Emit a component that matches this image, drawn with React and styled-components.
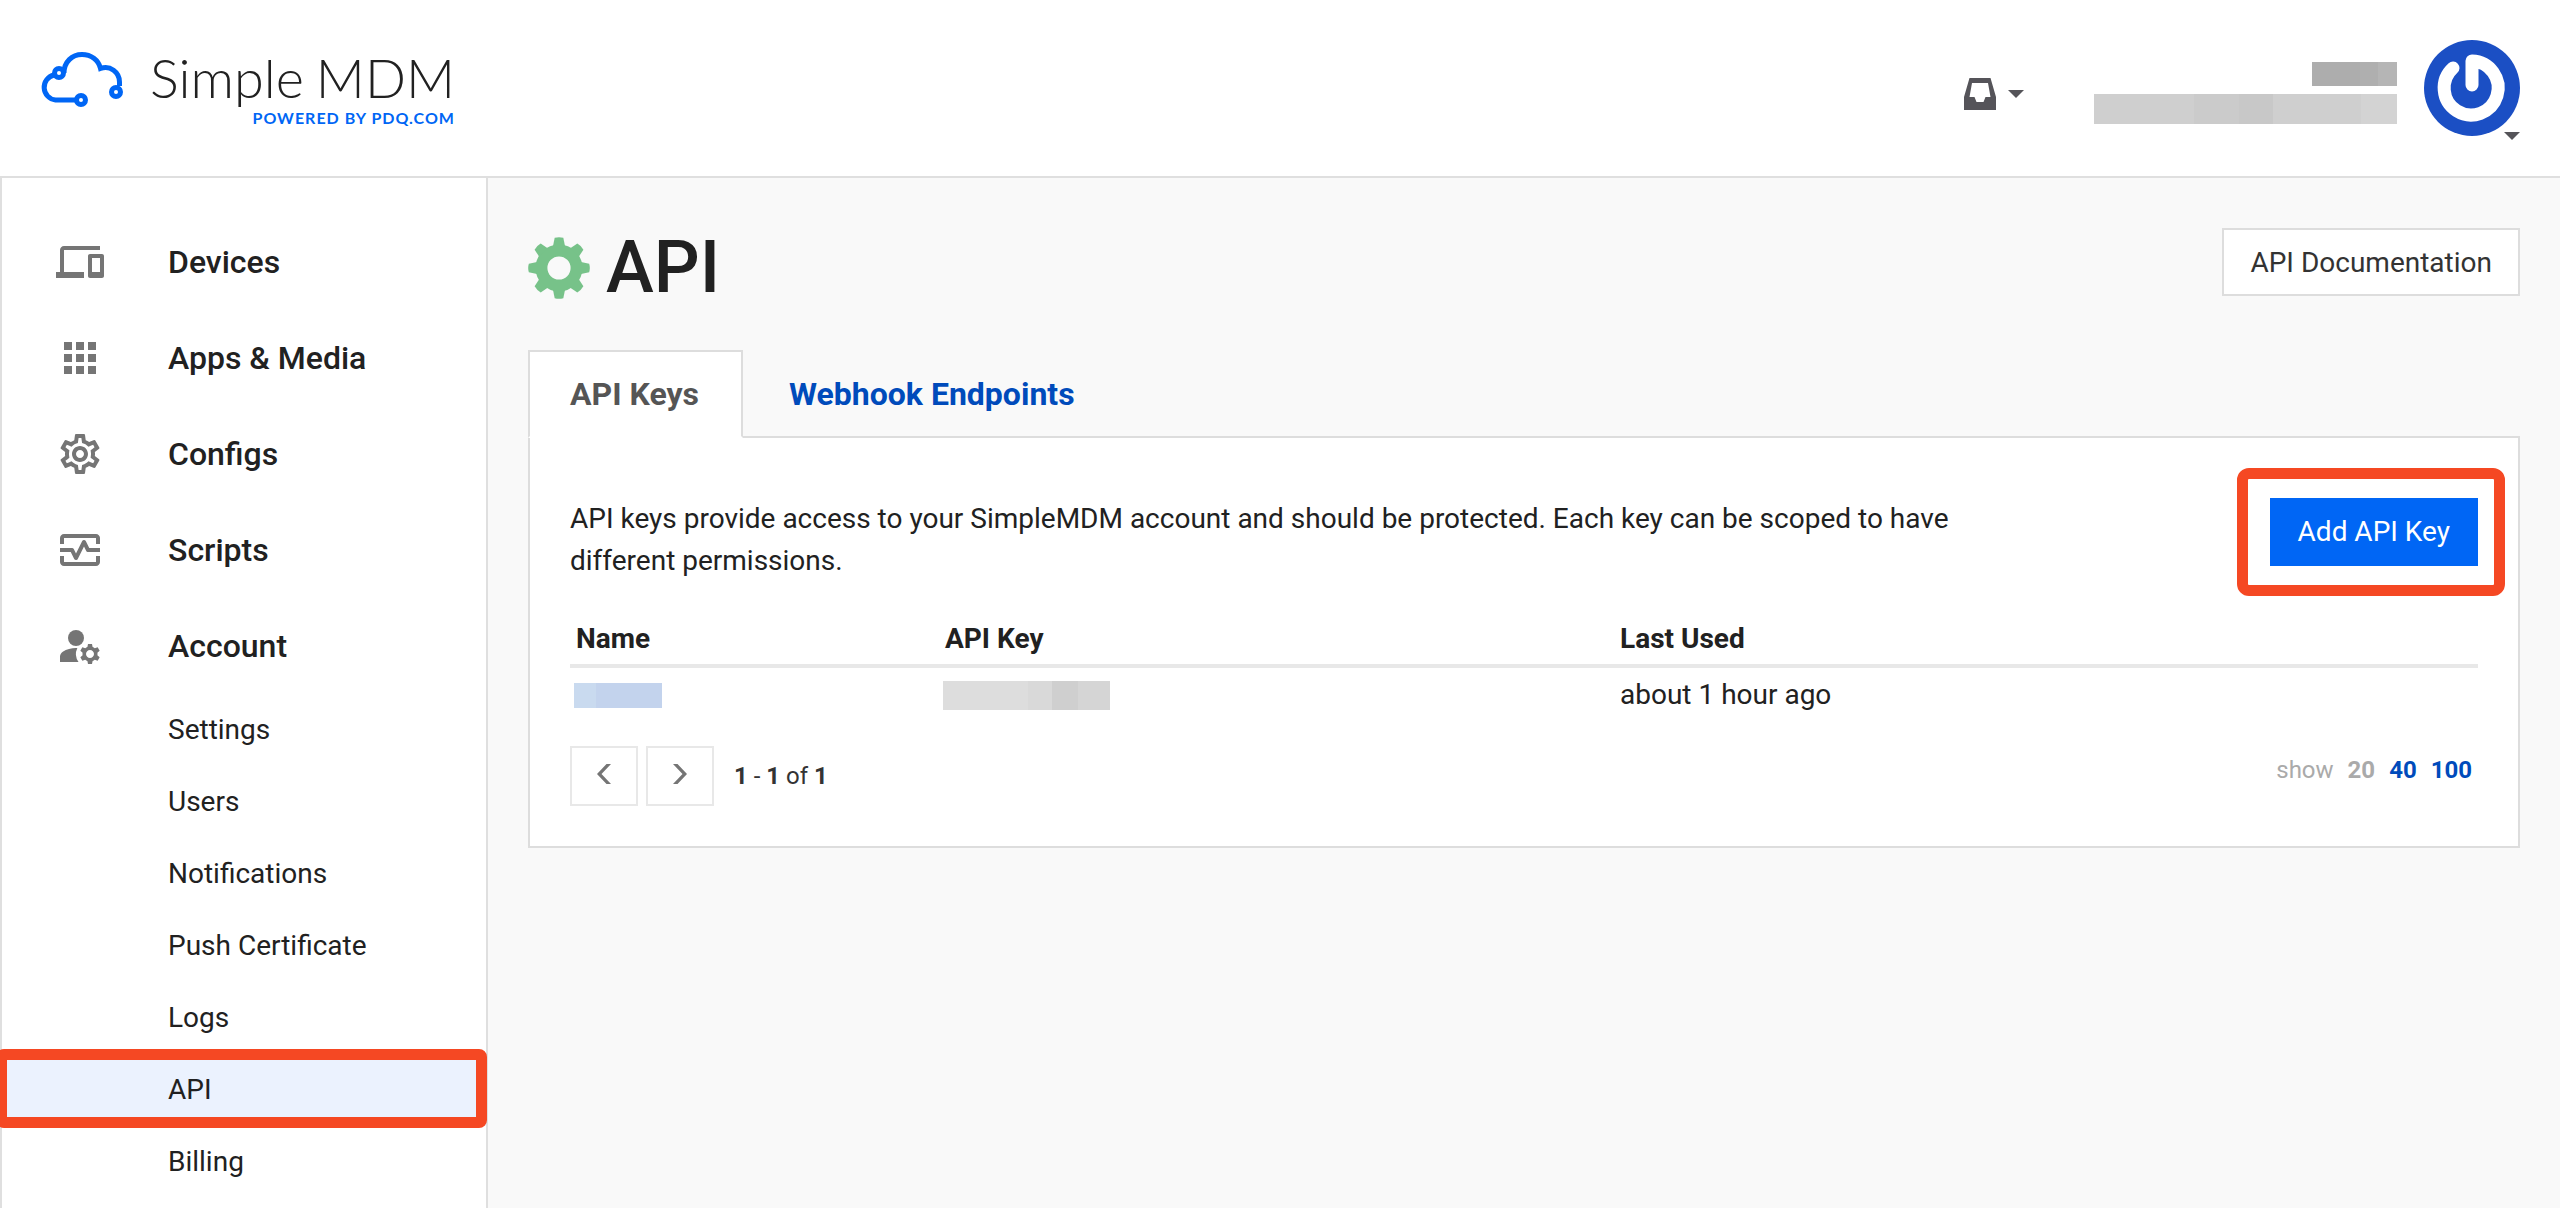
import styled, { createGlobalStyle } from "styled-components";
import {
  MdDevices,
  MdApps,
  MdOutlineSettings,
  MdOutlineMonitorHeart,
  MdManageAccounts,
} from "react-icons/md";

const GlobalStyle = createGlobalStyle`
  * {
    box-sizing: border-box;
  }
  body {
    margin: 0;
    background-color: #f9f9f9;
    color: #212121;
    font-family: Roboto, "Liberation Sans", sans-serif;
    font-size: 28px;
    line-height: 42px;
  }
  a {
    color: inherit;
    text-decoration: none;
  }
  button {
    font: inherit;
    cursor: pointer;
  }
`;

const Page = styled.div`
  display: flex;
  flex-direction: column;
  height: 100vh;
  overflow: hidden;
`;

const Header = styled.header`
  flex: none;
  display: flex;
  justify-content: space-between;
  align-items: flex-start;
  padding: 40px 40px 32px;
  height: 178px;
  background-color: white;
  border-bottom: 2px solid #dfdfdf;
`;

const Logo = styled.a`
  display: flex;
  gap: 24px;
  padding-top: 8px;
`;

const LogoText = styled.span`
  display: flex;
  flex-direction: column;
  align-items: flex-end;
`;

const Brand = styled.span`
  display: flex;
  gap: 12px;
  font-family: Lato, sans-serif;
  font-weight: 300;
  font-size: 54px;
  line-height: 60px;
`;

const Tagline = styled.span`
  color: #0066f5;
  font-family: Lato, sans-serif;
  font-weight: 700;
  font-size: 16px;
  line-height: 20px;
  letter-spacing: 1px;
`;

const HeaderRight = styled.div`
  display: flex;
  align-items: flex-start;
`;

const InboxButton = styled.button`
  display: flex;
  align-items: center;
  gap: 12px;
  padding: 0;
  margin: 38px 70px 0 0;
  border: none;
  background: none;
`;

const Person = styled.div`
  display: flex;
  flex-direction: column;
  align-items: flex-end;
  gap: 8px;
  padding-top: 22px;
  margin-right: 27px;
`;

const Redacted = styled.span`
  display: block;
  width: ${(props) => props.$width}px;
  height: ${(props) => props.$height}px;
  background: linear-gradient(to right, ${(props) => props.$fill});
`;

const AvatarButton = styled.button`
  position: relative;
  padding: 0;
  border: none;
  background: none;
  line-height: 0;
`;

const AvatarCaret = styled.span`
  position: absolute;
  right: 0;
  bottom: -4px;
`;

const Body = styled.div`
  flex: 1;
  display: flex;
  min-height: 0;
`;

const Sidebar = styled.nav`
  flex: none;
  width: 488px;
  padding-top: 36px;
  background-color: white;
  border: 2px solid #dfdfdf;
  border-width: 0 2px;
`;

const NavItem = styled.a`
  display: flex;
  align-items: center;
  gap: 64px;
  height: 96px;
  padding-left: 54px;
  font-size: 32px;
  font-weight: 500;

  svg {
    width: 48px;
    height: 48px;
    color: #757575;
  }
`;

const SubItem = styled.a`
  position: relative;
  display: flex;
  align-items: center;
  height: 72px;
  padding-left: 166px;
  background-color: ${(props) => (props.$active ? "#ebf2fe" : "transparent")};
`;

const NavMark = styled.span`
  position: absolute;
  inset: -5px -1px -2px -6px;
  border: 11px solid #f54823;
  border-radius: 8px;
`;

const Content = styled.main`
  flex: 1;
  min-width: 0;
  padding: 50px 40px;
`;

const TitleRow = styled.div`
  display: flex;
  justify-content: space-between;
  align-items: flex-start;
  margin-bottom: 42px;
`;

const Title = styled.h1`
  display: flex;
  align-items: center;
  gap: 16px;
  margin: 0;
  font-size: 72px;
  font-weight: 500;
  line-height: 80px;
`;

const DocButton = styled.a`
  padding: 12px 26px 10px;
  border: 2px solid #dddddd;
  background-color: white;
  color: #333333;
`;

const Tabs = styled.div`
  display: flex;
`;

const Tab = styled.button`
  height: 88px;
  padding: 0 42px 0 ${(props) => (props.$active ? 40 : 44)}px;
  margin-bottom: -2px;
  border: 2px solid;
  border-color: ${(props) =>
    props.$active ? "#dddddd #dddddd white" : "transparent"};
  background-color: ${(props) => (props.$active ? "white" : "transparent")};
  color: ${(props) => (props.$active ? "#555555" : "#004bbb")};
  font-size: 32px;
  font-weight: 700;
  z-index: 1;
`;

const Panel = styled.section`
  padding: 60px 40px 40px;
  background-color: white;
  border: 2px solid #dddddd;
`;

const Intro = styled.div`
  display: flex;
  justify-content: space-between;
  align-items: flex-start;
  margin-bottom: 28px;
`;

const Description = styled.p`
  width: 78%;
  margin: 0;
`;

const AddWrap = styled.div`
  position: relative;
`;

const AddButton = styled.button`
  height: 68px;
  padding: 0 28px;
  border: none;
  background-color: #0066f5;
  color: white;
`;

const AddMark = styled.span`
  position: absolute;
  inset: -30px -27px -30px -33px;
  border: 11px solid #f54823;
  border-radius: 12px;
  pointer-events: none;
`;

const KeyTable = styled.table`
  width: 100%;
  border-collapse: collapse;
  table-layout: fixed;

  th,
  td {
    padding: 6px 6px 8px;
    text-align: left;
    vertical-align: middle;
  }
  td {
    padding-left: 4px;
  }
  td:last-child {
    padding-left: 6px;
  }
  th {
    padding: 8px 6px 4px;
    font-weight: 700;
    border-bottom: 4px solid #e8e8e8;
  }
  th:first-child {
    width: 369px;
  }
  th:nth-child(2) {
    width: 675px;
  }
`;

const Footer = styled.div`
  display: flex;
  justify-content: space-between;
  align-items: flex-start;
  padding-top: 22px;
  font-size: 24px;
`;

const Pager = styled.div`
  display: flex;
  align-items: center;
  gap: 8px;
`;

const PageButton = styled.button`
  display: flex;
  align-items: center;
  justify-content: center;
  width: 68px;
  height: 60px;
  padding: 0 0 4px;
  border: 2px solid #e8e8e8;
  background-color: white;
`;

const Count = styled.span`
  margin-left: 12px;
  color: #333333;
`;

const PageSize = styled.div`
  display: flex;
  gap: 14px;
  padding: 3px 6px 0 0;
  color: #aaaaaa;

  a {
    color: #004bbb;
  }
`;

const Caret = () => (
  <svg width="16" height="8" viewBox="0 0 16 8">
    <path d="M0 0h16l-8 8z" fill="#555459" />
  </svg>
);

const Chevron = ({ d }) => (
  <svg width="14" height="20" viewBox="0 0 14 20">
    <path d={d} fill="#757575" />
  </svg>
);

const GearIcon = () => (
  <svg width="62" height="62" viewBox="-31 -31 62 62">
    <circle r="17.5" fill="none" stroke="#77c289" strokeWidth="11.8" />
    {[0, 45, 90, 135, 180, 225, 270, 315].map((angle) => (
      <path
        key={angle}
        d="M-6-22L-4.300-30.200Q0-31.400 4.300-30.200L6-22z"
        fill="#77c289"
        transform={`rotate(${angle})`}
      />
    ))}
  </svg>
);

const CloudLogo = () => (
  <svg
    width="86"
    height="62"
    viewBox="0 0 86 62"
    fill="none"
    stroke="#0066f5"
    strokeWidth="5"
  >
    <path d="M36 52H15.500A12.700 12.700 0 0 1 14 27" />
    <path d="M24 25C24 14 32 6.500 42 6.500C51 6.500 58.500 12 60.500 20.500C70 17 79.500 24 79.500 34V38" />
    <circle cx="19" cy="25" r="4.500" />
    <circle cx="41" cy="52" r="4.500" />
    <circle cx="76" cy="44" r="4.500" />
  </svg>
);

const navItems = [
  { label: "Devices", icon: MdDevices },
  { label: "Apps & Media", icon: MdApps },
  { label: "Configs", icon: MdOutlineSettings },
  { label: "Scripts", icon: MdOutlineMonitorHeart },
  { label: "Account", icon: MdManageAccounts },
];

const subItems = [
  "Settings",
  "Users",
  "Notifications",
  "Push Certificate",
  "Logs",
  "API",
  "Billing",
];

const App = () => {
  return (
    <Page>
      <GlobalStyle />
      <Header>
        <Logo href="#">
          <CloudLogo />
          <LogoText>
            <Brand>
              <span>Simple</span>
              <span>MDM</span>
            </Brand>
            <Tagline>POWERED BY PDQ.COM</Tagline>
          </LogoText>
        </Logo>
        <HeaderRight>
          <InboxButton aria-label="Inbox">
            <svg width="32" height="32" viewBox="0 0 32 32">
              <path
                fillRule="evenodd"
                fill="#555459"
                d="M5.500 0h21L32 19v13H0V19zM8 5L5.500 19h5l2 5h7l2-5h5L24 5z"
              />
            </svg>
            <Caret />
          </InboxButton>
          <Person>
            <Redacted
              $width={85}
              $height={24}
              $fill="#adadad 56%, #afafaf 56% 78%, #b5b5b5 78%"
            />
            <Redacted
              $width={303}
              $height={30}
              $fill="#cfcfcf 33%, #cbcbcb 33% 48%, #c8c8c8 48% 59%, #cfcfcf 59% 88%, #d3d3d3 88%"
            />
          </Person>
          <AvatarButton aria-label="Profile">
            <svg width="96" height="96" viewBox="0 0 96 96">
              <circle cx="48" cy="48" r="48" fill="#1b4fc4" />
              <path
                d="M29 28A27 27 0 1 0 48 21V45"
                fill="none"
                stroke="white"
                strokeWidth="13"
                strokeLinecap="round"
                strokeLinejoin="round"
              />
            </svg>
            <AvatarCaret>
              <Caret />
            </AvatarCaret>
          </AvatarButton>
        </HeaderRight>
      </Header>
      <Body>
        <Sidebar>
          {navItems.map(({ label, icon: Icon }) => (
            <NavItem href="#" key={label}>
              <Icon />
              {label}
            </NavItem>
          ))}
          {subItems.map((label) => (
            <SubItem href="#" key={label} $active={label === "API"}>
              {label}
              {label === "API" && <NavMark />}
            </SubItem>
          ))}
        </Sidebar>
        <Content>
          <TitleRow>
            <Title>
              <GearIcon />
              API
            </Title>
            <DocButton href="#">API Documentation</DocButton>
          </TitleRow>
          <Tabs>
            <Tab $active>API Keys</Tab>
            <Tab>Webhook Endpoints</Tab>
          </Tabs>
          <Panel>
            <Intro>
              <Description>
                API keys provide access to your SimpleMDM account and should be
                protected. Each key can be scoped to have different permissions.
              </Description>
              <AddWrap>
                <AddButton>Add API Key</AddButton>
                <AddMark />
              </AddWrap>
            </Intro>
            <KeyTable>
              <thead>
                <tr>
                  <th>Name</th>
                  <th>API Key</th>
                  <th>Last Used</th>
                </tr>
              </thead>
              <tbody>
                <tr>
                  <td>
                    <Redacted
                      $width={88}
                      $height={25}
                      $fill="#c9daef 25%, #c3d3ed 25%"
                    />
                  </td>
                  <td>
                    <Redacted
                      $width={167}
                      $height={29}
                      $fill="#dddddd 51%, #d9d9d9 51% 65%, #cfcfcf 65% 81%, #d5d5d5 81%"
                    />
                  </td>
                  <td>about 1 hour ago</td>
                </tr>
              </tbody>
            </KeyTable>
            <Footer>
              <Pager>
                <PageButton aria-label="Previous page">
                  <Chevron d="M9.500 0H14L4.500 10L14 20H9.500L0 10z" />
                </PageButton>
                <PageButton aria-label="Next page">
                  <Chevron d="M4.500 0H0L9.500 10L0 20H4.500L14 10z" />
                </PageButton>
                <Count>
                  <b>1</b> - <b>1</b> of <b>1</b>
                </Count>
              </Pager>
              <PageSize>
                show <b>20</b>
                <a href="#">
                  <b>40</b>
                </a>
                <a href="#">
                  <b>100</b>
                </a>
              </PageSize>
            </Footer>
          </Panel>
        </Content>
      </Body>
    </Page>
  );
};

export default App;
